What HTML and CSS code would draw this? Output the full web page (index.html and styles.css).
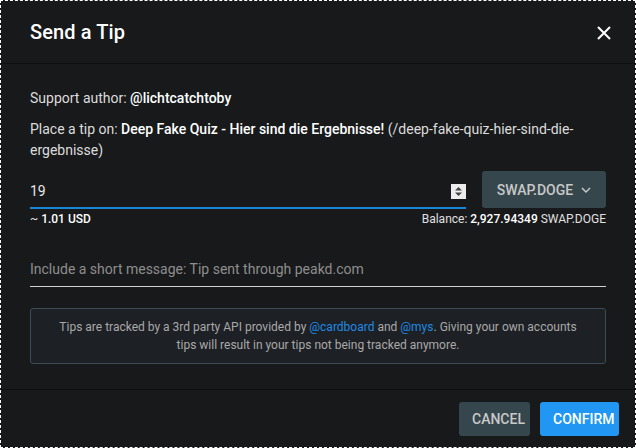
FILE: index.html
```html
<!DOCTYPE html>
<html>
<head>
<meta charset="utf-8">
<link rel="stylesheet" href="styles.css">
</head>
<body>
<div class="dialog">
  <div class="header">
    <h1 class="title">Send a Tip</h1>
    <svg class="close" width="14" height="14" viewBox="0 0 14 14"><path d="M1 1L13 13M13 1L1 13" stroke="#fff" stroke-width="2" fill="none"/></svg>
  </div>
  <div class="body">
    <p class="line">Support author: <b>@lichtcatchtoby</b></p>
    <p class="line">Place a tip on: <b>Deep Fake Quiz - Hier sind die Ergebnisse!</b> (/deep-fake-quiz-hier-sind-die-ergebnisse)</p>
    <div class="amount-row">
      <div class="amount-field">
        <span class="amount-value">19</span>
        <svg class="spinner" width="15" height="15" viewBox="0 0 15 15"><rect width="15" height="15" fill="#ececec"/><path d="M4 6.5L7.5 3L11 6.5Z M4 8.5L7.5 12L11 8.5Z" fill="#444"/></svg>
      </div>
      <button class="token-btn">SWAP.DOGE <svg width="10" height="6" viewBox="0 0 10 6"><path d="M1 1L5 5L9 1" stroke="#ccc" stroke-width="1.4" fill="none"/></svg></button>
    </div>
    <div class="hint-row">
      <span class="usd">~ <b>1.01 USD</b></span>
      <span class="balance">Balance: <b>2,927.94349</b> SWAP.DOGE</span>
    </div>
    <div class="message-field">Include a short message: Tip sent through peakd.com</div>
    <div class="info">Tips are tracked by a 3rd party API provided by <a>@cardboard</a> and <a>@mys</a>. Giving your own accounts<br>tips will result in your tips not being tracked anymore.</div>
  </div>
  <div class="footer">
    <button class="btn cancel">CANCEL</button>
    <button class="btn confirm">CONFIRM</button>
  </div>
</div>
</body>
</html>
```
FILE: styles.css
```css
html, body {
  margin: 0;
  padding: 0;
  background: #18191b;
}
body {
  font-family: Roboto, "Liberation Sans", sans-serif;
  color: #e2e2e2;
}
.dialog {
  box-sizing: border-box;
  width: 636px;
  height: 448px;
  border: 1px dashed #ffffff;
  display: flex;
  flex-direction: column;
}
.header {
  height: 62px;
  border-bottom: 1px solid #0e0f10;
  display: flex;
  align-items: center;
  justify-content: space-between;
  padding: 0 24px 0 29px;
}
.title {
  margin: 0;
  font-size: 20px;
  font-weight: 500;
  color: #fff;
  letter-spacing: 0.1px;
}
.close {
  display: block;
  margin-top: 2px;
}
.body {
  flex: 1;
  padding: 24px 29px 0 29px;
  font-size: 14px;
}
.line {
  margin: 0 0 10px 0;
  line-height: 21px;
  color: #dcdcdc;
}
.line b {
  font-weight: 500;
  color: #fff;
}
.amount-row {
  display: flex;
  gap: 16px;
  margin-top: 10px;
  height: 37px;
}
.amount-field {
  flex: 1;
  border-bottom: 2px solid #1a86d6;
  display: flex;
  align-items: center;
  justify-content: space-between;
  padding-top: 4px;
  margin-bottom: -1px;
}
.amount-value {
  color: #e8e8e8;
  font-size: 14px;
}
.spinner {
  display: block;
}
.token-btn {
  width: 124px;
  height: 37px;
  border: none;
  border-radius: 3px;
  background: #36464d;
  color: #c8c8c8;
  font-family: Roboto, "Liberation Sans", sans-serif;
  font-size: 14px;
  font-weight: 500;
  display: flex;
  align-items: center;
  justify-content: center;
  gap: 8px;
  padding: 0;
}
.hint-row {
  display: flex;
  justify-content: space-between;
  font-size: 12px;
  line-height: 16px;
  margin-top: 3px;
  color: #e0e0e0;
}
.usd b, .balance b {
  font-weight: 500;
  color: #fff;
}
.message-field {
  margin-top: 33px;
  height: 27px;
  line-height: 18px;
  border-bottom: 1px solid #d0d0d0;
  color: #8e8e8e;
  font-size: 14px;
  box-sizing: border-box;
}
.info {
  margin-top: 21px;
  height: 56px;
  box-sizing: border-box;
  border: 1px solid #3f4b54;
  border-radius: 3px;
  background: #1d2024;
  text-align: center;
  font-size: 12px;
  line-height: 18px;
  padding-top: 9px;
  color: #a9a9a9;
}
.info a {
  color: #1f8ae2;
}
.footer {
  height: 58px;
  border-top: 1px solid #0e0f10;
  display: flex;
  justify-content: flex-end;
  align-items: flex-start;
  gap: 10px;
  padding: 12px 16px 0 0;
  box-sizing: border-box;
}
.btn {
  height: 34px;
  border: none;
  border-radius: 3px;
  font-family: Roboto, "Liberation Sans", sans-serif;
  font-size: 14px;
  font-weight: 500;
  padding: 0 13px;
}
.cancel {
  background: #36464d;
  color: #c8c8c8;
  width: 71px;
}
.confirm {
  background: #2196f3;
  color: #fff;
  width: 79px;
}
```
